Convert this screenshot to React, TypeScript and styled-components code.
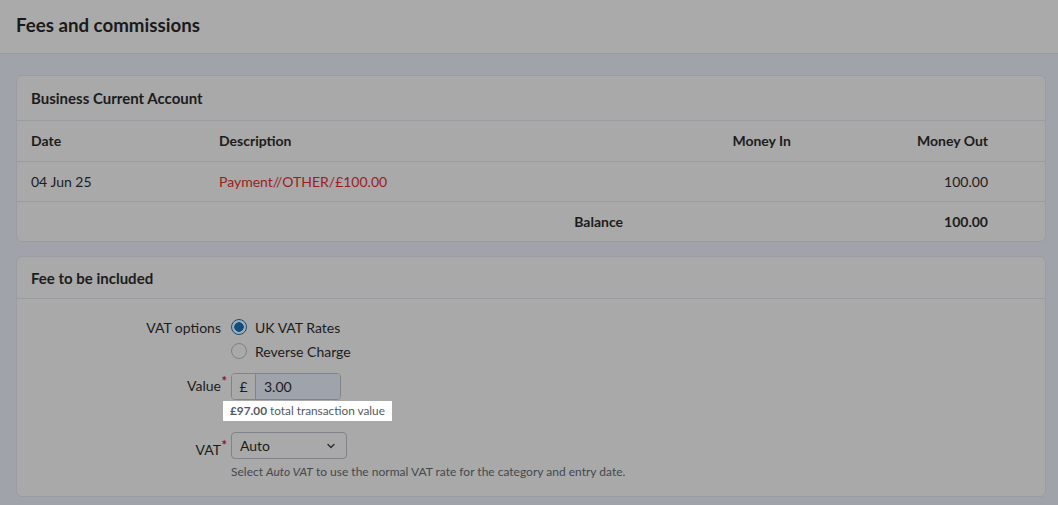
import styled, { createGlobalStyle } from "styled-components";

const GlobalStyle = createGlobalStyle`
  html, body {
    margin: 0;
    padding: 0;
    background: #a0a3a9;
    font-family: Lato, "Open Sans", sans-serif;
    color: #1c1c1c;
  }
  * { box-sizing: border-box; }
`;

const rows = [
  { date: "04 Jun 25", desc: "Payment//OTHER/£100.00", moneyIn: "", moneyOut: "100.00" },
];

function App() {
  return (
    <>
      <GlobalStyle />
      <Page>
        <TopBar>
          <PageTitle>Fees and commissions</PageTitle>
        </TopBar>
        <Content>
          <Card>
            <CardHeader>Business Current Account</CardHeader>
            <Table>
              <thead>
                <tr>
                  <Th>Date</Th>
                  <Th>Description</Th>
                  <Th $right>Money In</Th>
                  <Th $right>Money Out</Th>
                  <Th />
                </tr>
              </thead>
              <tbody>
                {rows.map((r) => (
                  <tr key={r.desc}>
                    <Td>{r.date}</Td>
                    <Td>
                      <DescLink>{r.desc}</DescLink>
                    </Td>
                    <Td $right>{r.moneyIn}</Td>
                    <Td $right>{r.moneyOut}</Td>
                    <Td />
                  </tr>
                ))}
                <tr>
                  <Td $last />
                  <Td $last $right $bold>
                    Balance
                  </Td>
                  <Td $last />
                  <Td $last $right $bold>
                    100.00
                  </Td>
                  <Td $last />
                </tr>
              </tbody>
            </Table>
          </Card>

          <Card>
            <CardHeader $small>Fee to be included</CardHeader>
            <Form>
              <FieldRow>
                <Label>VAT options</Label>
                <Field>
                  <RadioLine>
                    <Radio $checked />
                    UK VAT Rates
                  </RadioLine>
                  <RadioLine>
                    <Radio />
                    Reverse Charge
                  </RadioLine>
                </Field>
              </FieldRow>

              <FieldRow $gap={10}>
                <Label $required>Value</Label>
                <Field>
                  <InputGroup>
                    <Addon>£</Addon>
                    <ValueInput>3.00</ValueInput>
                  </InputGroup>
                  <Spotlight>
                    <strong>£97.00</strong> total transaction value
                  </Spotlight>
                </Field>
              </FieldRow>

              <FieldRow $gap={11}>
                <Label $required $pad={9}>VAT</Label>
                <Field>
                  <Select>
                    Auto
                    <svg width="10" height="10" viewBox="0 0 10 10">
                      <path d="M2 3.5 L5 6.5 L8 3.5" fill="none" stroke="#333" strokeWidth="1.5" strokeLinecap="round" strokeLinejoin="round" />
                    </svg>
                  </Select>
                  <Hint>
                    Select <em>Auto VAT</em> to use the normal VAT rate for the category and entry date.
                  </Hint>
                </Field>
              </FieldRow>
            </Form>
          </Card>
        </Content>
      </Page>
    </>
  );
}

export default App;

const Page = styled.div`
  width: 100%;
  min-height: 505px;
`;

const TopBar = styled.header`
  height: 54px;
  background: #aaaaaa;
  border-bottom: 1px solid #979a9f;
  display: flex;
  align-items: center;
  padding: 0 16px;
`;

const PageTitle = styled.h1`
  margin: 0;
  font-size: 18.7px;
  font-weight: 700;
  color: #1a1a1a;
  margin-top: -4px;
`;

const Content = styled.main`
  padding: 21px 12px 0 16px;
  display: flex;
  flex-direction: column;
  gap: 14px;
`;

const Card = styled.section`
  background: #a9a9a9;
  border: 1px solid #999ca1;
  border-radius: 6px;
  overflow: hidden;
`;

const CardHeader = styled.div<{ $small?: boolean }>`
  height: ${(p) => (p.$small ? 42 : 45)}px;
  display: flex;
  align-items: center;
  padding: 0 14px;
  font-size: 15px;
  font-weight: 700;
  border-bottom: 1px solid #999ca1;
`;

const Table = styled.table`
  width: 100%;
  border-collapse: collapse;
  font-size: 14px;
`;

const Th = styled.th<{ $right?: boolean }>`
  height: 40px;
  padding: 0 14px;
  text-align: ${(p) => (p.$right ? "right" : "left")};
  font-weight: 700;
  border-bottom: 1px solid #999ca1;
  &:nth-child(1) { width: 188px; }
  &:nth-child(2) { width: 432px; }
  &:nth-child(3) { width: 168px; }
  &:nth-child(4) { width: 197px; }
`;

const Td = styled.td<{ $right?: boolean; $bold?: boolean; $last?: boolean }>`
  height: 40px;
  padding: 0 14px;
  text-align: ${(p) => (p.$right ? "right" : "left")};
  font-weight: ${(p) => (p.$bold ? 700 : 400)};
  border-bottom: ${(p) => (p.$last ? "none" : "1px solid #999ca1")};
`;

const DescLink = styled.span`
  color: #9c1d1d;
`;

const Form = styled.div`
  padding: 16px 0 17px;
  display: flex;
  flex-direction: column;
`;

const FieldRow = styled.div<{ $gap?: number }>`
  display: grid;
  grid-template-columns: 204px 1fr;
  column-gap: 10px;
  margin-top: ${(p) => p.$gap ?? 0}px;
  font-size: 14px;
`;

const Label = styled.div<{ $required?: boolean; $pad?: number }>`
  text-align: right;
  padding-top: ${(p) => p.$pad ?? 4}px;
  position: relative;
  &::after {
    content: ${(p) => (p.$required ? '"*"' : "none")};
    position: absolute;
    right: -6px;
    top: ${(p) => (p.$pad ?? 4) - 4}px;
    color: #8b1414;
    font-weight: 700;
    font-size: 13px;
  }
`;

const Field = styled.div`
  display: flex;
  flex-direction: column;
  align-items: flex-start;
`;

const RadioLine = styled.label`
  display: flex;
  align-items: center;
  gap: 8px;
  height: 24px;
`;

const Radio = styled.span<{ $checked?: boolean }>`
  width: 16px;
  height: 16px;
  border-radius: 50%;
  border: 1px solid ${(p) => (p.$checked ? "#0d4f85" : "#7e8187")};
  background: ${(p) => (p.$checked ? "radial-gradient(circle, #0d4f85 0 4.5px, #a9a9a9 5px)" : "#a9a9a9")};
`;

const InputGroup = styled.div`
  display: flex;
  height: 27px;
  width: 110px;
  border: 1px solid #808389;
  border-radius: 4px;
  overflow: hidden;
`;

const Addon = styled.span`
  width: 24px;
  display: flex;
  align-items: center;
  justify-content: center;
  border-right: 1px solid #808389;
  background: #a9a9a9;
`;

const ValueInput = styled.span`
  flex: 1;
  display: flex;
  align-items: center;
  padding-left: 8px;
  background: #9fa3ab;
`;

const Spotlight = styled.div`
  margin-top: 1px;
  margin-left: -8px;
  padding: 2px 7px 3px;
  background: #ffffff;
  font-size: 11.8px;
  color: #555a61;
  strong { font-weight: 700; }
`;

const Select = styled.div`
  width: 116px;
  height: 27px;
  border: 1px solid #808389;
  border-radius: 4px;
  display: flex;
  align-items: center;
  justify-content: space-between;
  padding: 0 10px 0 8px;
`;

const Hint = styled.div`
  margin-top: 5px;
  font-size: 12px;
  color: #44484e;
`;
